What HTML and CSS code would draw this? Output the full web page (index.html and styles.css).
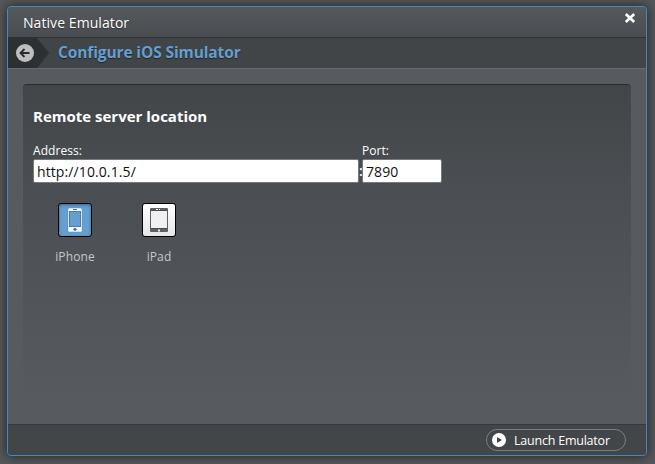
FILE: index.html
```html
<!DOCTYPE html>
<html lang="en">
<head>
<meta charset="utf-8">
<title>Native Emulator</title>
<link rel="stylesheet" href="styles.css">
</head>
<body>
<main class="dialog">
  <header class="titlebar">
    <h1 class="title"><span>Native Emulator</span></h1>
    <button class="close" aria-label="Close"><svg width="12" height="12" viewBox="0 0 12 12"><path d="M1.8 2l8.4 8M10.2 2l-8.4 8" stroke="#fff" stroke-width="2.7"/></svg></button>
  </header>
  <nav class="crumbs">
    <svg class="back" width="43" height="30" viewBox="0 0 43 30"><path d="M0 0h29l12 15-12 15H0z" fill="#2d3032"/><path d="M29 0l12 15-12 15" fill="none" stroke="#37393b"/><circle cx="17" cy="15" r="9" fill="#bdbec0"/><path d="M21.5 15h-8M16.5 11l-4 4 4 4" fill="none" stroke="#292c2e" stroke-width="1.8"/></svg>
    <h2 class="step"><span>Configure iOS Simulator</span></h2>
  </nav>
  <section class="content">
    <div class="panel">
      <h3 class="heading"><span>Remote server location</span></h3>
      <div class="fields">
        <label class="field address"><span class="label">Address:</span><input value="http://10.0.1.5/"></label>
        <span class="colon">:</span>
        <label class="field port"><span class="label">Port:</span><input value="7890"></label>
      </div>
      <div class="devices">
        <div class="device">
          <div class="tile selected"><svg width="32" height="32" viewBox="0 0 32 32"><rect x="9" y="4" width="14" height="24" rx="1.5" fill="#fff" stroke="#4f88b8" stroke-width=".5"/><rect x="10.5" y="7.5" width="11" height="15" fill="#649fd1" stroke="#4c7da8"/><path d="M14 5.5h4" stroke="#46779f"/><circle cx="16" cy="25.3" r="1.6" fill="#46779f"/></svg></div>
          <span class="name">iPhone</span>
        </div>
        <div class="device">
          <div class="tile"><svg width="32" height="32" viewBox="0 0 32 32"><rect x="7" y="4" width="18" height="24" rx="1" fill="#5c6068"/><rect x="8" y="7" width="16" height="17" fill="#f0f0f0"/><path d="M8 6.5h16M8 24.5h16" stroke="#484c52"/><path d="M13 5.5h2m1 0h1" stroke="#fff"/><rect x="15" y="25.5" width="2" height="2" fill="#eee"/></svg></div>
          <span class="name">iPad</span>
        </div>
      </div>
    </div>
  </section>
  <footer class="footer">
    <button class="launch"><svg width="14" height="14" viewBox="0 0 14 14"><circle cx="7" cy="7" r="7" fill="#fff"/><path d="M5 4l5 3-5 3z" fill="#424547"/></svg><span>Launch Emulator</span></button>
  </footer>
</main>
</body>
</html>
```
FILE: styles.css
```css
* { box-sizing: border-box; }
body {
  margin: 0;
  height: 464px;
  padding: 6px 0 0 7px;
  overflow: hidden;
  background: #55585b;
  color: #fff;
  font-family: "Open Sans", "Noto Sans", sans-serif;
}
h1, h2, h3 { margin: 0; }
button { padding: 0; border: 0; background: none; color: inherit; font: inherit; }
svg { display: block; flex: none; }
.dialog {
  display: flex;
  flex-direction: column;
  width: 640px;
  height: 450px;
  border: 1px solid #4389c4;
  border-radius: 4px;
  overflow: hidden;
  background: #575a5e;
  box-shadow: 0 0 12px rgba(0, 0, 0, .65);
}
.titlebar {
  display: flex;
  justify-content: space-between;
  height: 31px;
  flex: none;
  padding: 0 10px 0 15px;
  border-bottom: 1px solid #2f3234;
  background: linear-gradient(#55595c, #494c50);
}
.title { font-size: 14px; line-height: 31px; font-weight: 400; letter-spacing: .07px; text-shadow: 0 1px 1px #303335; }
.close { align-self: flex-start; margin-top: 5px; }
.crumbs {
  display: flex;
  height: 31px;
  flex: none;
  border-bottom: 1px solid #686b6d;
  background: #424547;
}
.step { margin-left: 7px; font-size: 15.5px; line-height: 29px; font-weight: 700; letter-spacing: -.12px; color: #649fd1; text-shadow: 0 1px 1px #222; }
.content { flex: 1; padding: 15px; }
.panel {
  width: 608px;
  height: 315px;
  padding: 21px 10px 0;
  border-top: 1px solid #292c2e;
  border-radius: 4px;
  background: linear-gradient(#434648, #4a4d51 30%, #575a5e);
}
.heading { height: 37px; font-size: 15px; line-height: 20px; font-weight: 700; }
.fields { display: flex; align-items: flex-end; }
.field { display: flex; flex-direction: column; }
.label { height: 16px; font-size: 12px; line-height: 15px; letter-spacing: .05px; }
input {
  height: 24px;
  padding: 0 3px;
  border: 1px solid #777a7d;
  border-radius: 2px;
  background: #fff;
  color: #111;
  font: 14px "Open Sans", "Noto Sans", sans-serif;
  letter-spacing: .1px;
}
.address input { width: 326px; }
.port input { width: 80px; }
.colon { width: 3px; font-size: 14px; font-weight: 600; line-height: 24px; }
.devices { display: flex; margin-top: 20px; }
.device { display: flex; flex-direction: column; align-items: center; width: 84px; }
.tile {
  width: 34px;
  height: 34px;
  border: 1px solid #000;
  border-radius: 3px;
  background: linear-gradient(#fff, #e6e6e6);
}
.tile.selected { background: #649fd1; box-shadow: inset 0 1px 3px #37658c; }
.name { margin-top: 11px; font-size: 12px; line-height: 17px; letter-spacing: .12px; color: #c6c8ca; }
.footer {
  display: flex;
  justify-content: flex-end;
  height: 31px;
  flex: none;
  padding: 4px 20px 0 0;
  border-top: 1px solid #36393b;
  background: #434648;
}
.launch {
  display: flex;
  align-items: center;
  gap: 8px;
  width: 140px;
  height: 22px;
  padding-left: 5px;
  border: 1px solid #7b7e80;
  border-radius: 11px;
  font-size: 12.5px;
  letter-spacing: -.22px;
  white-space: nowrap;
}
```
